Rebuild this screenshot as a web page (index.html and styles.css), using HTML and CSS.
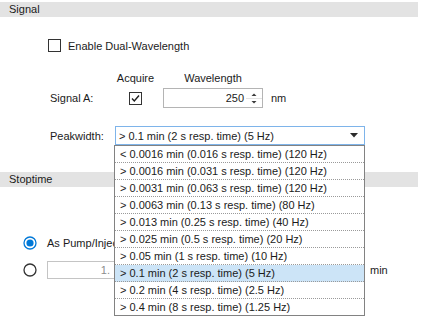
FILE: index.html
```html
<!DOCTYPE html>
<html lang="en">
<head>
<meta charset="UTF-8">
<meta name="viewport" content="width=device-width, initial-scale=1.0">
<title>Signal Settings</title>
<link rel="stylesheet" href="styles.css">
</head>
<body>

<!-- Signal section -->
<div class="section-header">Signal</div>

<label class="check-row">
  <span class="checkbox"></span>
  Enable Dual-Wavelength
</label>

<div class="signal-grid">
  <span></span>
  <span class="col-head">Acquire</span>
  <span class="col-head">Wavelength</span>
  <span></span>

  <span class="label">Signal A:</span>
  <span class="cell-center">
    <span class="checkbox">
      <svg width="11" height="11" viewBox="0 0 11 11"><path d="M2 5.5 L4.3 8 L9 2.5" fill="none" stroke="#1e1e1e" stroke-width="1.4"/></svg>
    </span>
  </span>
  <div class="spin">
    <span class="spin-value">250</span>
    <span class="spin-buttons">
      <svg width="16" height="18" viewBox="0 0 16 18">
        <path d="M5.5 7 L8 4.5 L10.5 7 Z" fill="#3a3a3a"/>
        <line x1="0" y1="9.5" x2="16" y2="9.5" stroke="#e3e3e3"/>
        <path d="M5.5 12 L8 14.5 L10.5 12 Z" fill="#3a3a3a"/>
      </svg>
    </span>
  </div>
  <span class="unit">nm</span>
</div>

<div class="peak-row">
  <span class="label peak-label">Peakwidth:</span>
  <div class="combo">
    <div class="combo-box">
      <span>&gt; 0.1 min (2 s resp. time) (5 Hz)</span>
      <svg width="8" height="5" viewBox="0 0 8 5"><path d="M0 0 L8 0 L4 4.5 Z" fill="#2b2b2b"/></svg>
    </div>
    <!-- open drop-down list -->
    <ul class="combo-list">
      <li>&lt; 0.0016 min (0.016 s resp. time) (120 Hz)</li>
      <li>&gt; 0.0016 min (0.031 s resp. time) (120 Hz)</li>
      <li>&gt; 0.0031 min (0.063 s resp. time) (120 Hz)</li>
      <li>&gt; 0.0063 min (0.13 s resp. time) (80 Hz)</li>
      <li>&gt; 0.013 min (0.25 s resp. time) (40 Hz)</li>
      <li>&gt; 0.025 min (0.5 s resp. time) (20 Hz)</li>
      <li>&gt; 0.05 min (1 s resp. time) (10 Hz)</li>
      <li class="selected">&gt; 0.1 min (2 s resp. time) (5 Hz)</li>
      <li>&gt; 0.2 min (4 s resp. time) (2.5 Hz)</li>
      <li>&gt; 0.4 min (8 s resp. time) (1.25 Hz)</li>
    </ul>
  </div>
</div>

<!-- Stoptime section -->
<div class="section-header stoptime">Stoptime</div>

<label class="radio-row first">
  <svg class="radio" width="14" height="14" viewBox="0 0 14 14">
    <circle cx="7" cy="7" r="6" fill="#fff" stroke="#0078d7" stroke-width="1.3"/>
    <circle cx="7" cy="7" r="3.6" fill="#0078d7"/>
  </svg>
  As Pump/Injector
</label>

<div class="radio-row second">
  <svg class="radio" width="14" height="14" viewBox="0 0 14 14">
    <circle cx="7" cy="7" r="6" fill="#fff" stroke="#333" stroke-width="1.3"/>
  </svg>
  <div class="time-input">1.</div>
  <span class="unit time-unit">min</span>
</div>

</body>
</html>
```

FILE: styles.css
```css
html {
  background-color: #fff;
}

body {
  font-family: "Liberation Sans", Arial, sans-serif;
  font-size: 11px;
  color: #1b1b1b;
  background-color: #fff;
  margin: 0;
  padding: 0;
  min-height: 321px;
}

/* Section headers */
.section-header {
  margin: 2px 4px 0 0;
  height: 15px;
  line-height: 15px;
  padding-left: 9px;
  background-color: #e3e3e3;
}

.section-header.stoptime {
  margin-top: 27px;
}

/* Checkboxes */
.checkbox {
  display: flex;
  align-items: center;
  justify-content: center;
  box-sizing: border-box;
  width: 13px;
  height: 13px;
  border: 1px solid #333;
  background-color: #fff;
}

.check-row {
  display: flex;
  align-items: center;
  gap: 7px;
  height: 13px;
  margin: 22px 0 0 48px;
}

/* Signal A grid */
.signal-grid {
  display: grid;
  grid-template-columns: 58px 41px 100px auto;
  grid-template-rows: 16px 20px;
  column-gap: 7px;
  row-gap: 2px;
  margin: 18px 0 0 50px;
  align-items: center;
}

.col-head {
  text-align: center;
}

.cell-center {
  display: flex;
  justify-content: center;
}

.spin {
  display: flex;
  align-items: center;
  box-sizing: border-box;
  height: 20px;
  border: 1px solid #b4b4b4;
}

.spin-value {
  flex: 1;
  text-align: right;
  padding-right: 2px;
}

.spin-buttons {
  display: flex;
}

.unit {
  padding-left: 1px;
}

/* Peakwidth combo */
.peak-row {
  display: flex;
  align-items: center;
  margin: 18px 0 0 50px;
}

.peak-label {
  width: 65px;
}

.combo {
  position: relative;
  width: 250px;
}

.combo-box {
  display: flex;
  align-items: center;
  justify-content: space-between;
  box-sizing: border-box;
  height: 19px;
  padding: 0 6px 0 3px;
  border: 1px solid #7eb4ea;
}

.combo-list {
  position: absolute;
  top: 19px;
  left: -1px;
  width: 251px;
  box-sizing: border-box;
  margin: 0;
  padding: 0;
  list-style: none;
  background-color: #fff;
  border: 1px solid #828282;
  z-index: 10;
}

.combo-list li {
  height: 16px;
  line-height: 16px;
  padding-left: 5px;
  border-bottom: 1px dotted #9a9a9a;
  white-space: nowrap;
}

.combo-list li:last-child {
  border-bottom: none;
}

.combo-list li.selected {
  background-color: #cce4f7;
}

/* Stoptime radios */
.radio-row {
  display: flex;
  align-items: center;
  gap: 10px;
  margin-left: 23px;
}

.radio-row.first {
  height: 14px;
  margin-top: 49px;
}

.radio-row.second {
  height: 18px;
  margin-top: 11px;
}

.time-input {
  box-sizing: border-box;
  width: 69px;
  height: 18px;
  line-height: 16px;
  padding-right: 5px;
  text-align: right;
  color: #8c8c8c;
  border: 1px solid #c4c4c4;
}

.time-unit {
  margin-left: 243px;
}
```
